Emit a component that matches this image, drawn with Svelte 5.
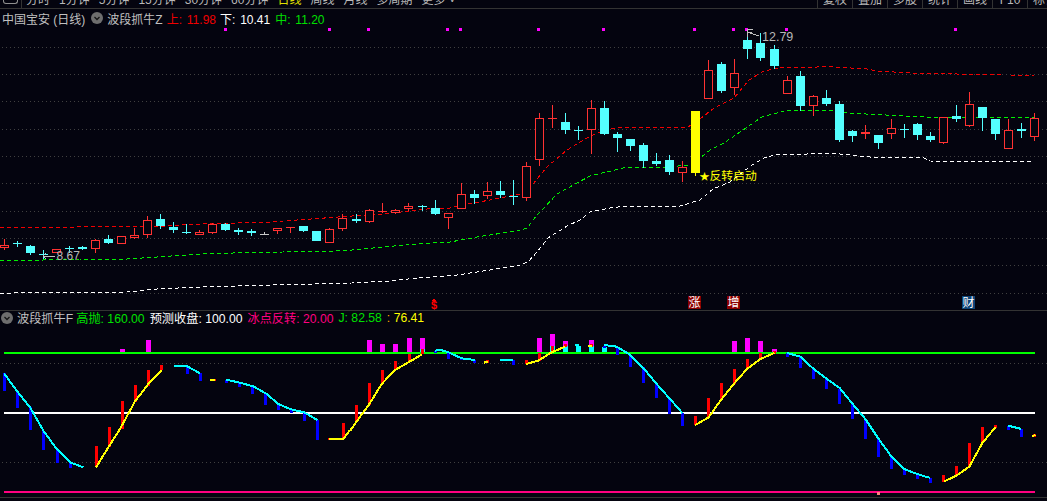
<script>
  const R = '#ff3232'
  const C = '#54ffff'

  // [open-top, close-bottom, high, low, colour]
  const candles = [
    [245,248,239,250,R],[243,243,241,247,C],[246,253,245,255,C],[254,254,250,259,C],[249,253,249,253,R],
    [248,248,246,253,C],[247,249,246,250,C],[240,249,239,253,R],[239,243,235,244,C],[236,244,236,244,R],
    [235,238,228,239,R],[220,235,216,238,R],[219,226,214,229,C],[227,230,222,233,C],[232,232,224,234,C],
    [232,235,230,235,R],[224,233,223,234,R],[224,230,223,231,C],[230,232,228,235,C],[231,233,229,236,C],
    [234,234,232,235,'#c8c8c8'],[228,231,228,234,R],[227,228,227,233,R],[226,231,226,232,C],[231,241,231,241,C],
    [229,243,228,243,R],[218,229,214,231,R],[219,221,214,223,C],[210,222,209,223,R],[211,212,203,213,R],
    [210,213,209,214,R],[206,209,203,211,R],[206,206,205,211,C],[208,214,200,215,C],[213,218,213,229,R],
    [194,209,183,209,R],[194,198,190,204,C],[191,196,182,199,R],[191,195,181,198,C],[196,196,180,205,C],
    [166,198,162,201,R],[118,160,113,166,R],[118,119,105,128,R],[122,130,113,134,C],[130,131,126,140,C],
    [108,130,100,154,R],[108,134,101,135,C],[134,138,132,152,C],[139,146,139,151,C],[145,161,143,168,C],
    [161,164,153,166,C],[160,172,155,175,C],[167,173,161,182,R],[111,173,111,176,'#ffff00'],[70,99,60,99,R],
    [64,91,62,93,C],[73,88,59,95,R],[40,49,30,59,C],[43,58,33,61,C],[49,66,45,69,C],
    [80,94,76,94,R],[76,106,71,111,C],[96,106,95,116,R],[98,104,90,106,C],[104,140,101,142,C],
    [131,136,130,142,C],[132,134,125,139,R],[135,143,135,149,C],[128,134,119,139,R],[129,130,124,138,C],
    [124,135,123,140,C],[136,140,132,142,C],[117,143,117,144,R],[116,119,105,122,C],[104,126,92,127,R],
    [107,118,107,131,C],[119,134,119,140,C],[130,149,119,149,R],[129,131,123,138,C],[118,137,113,141,R]
  ]
  const candleX = n => 4.5 + 13 * n + (n >= 59 ? 3 : n >= 32 ? 2 : n >= 27 ? 1 : 0)

  const pts = a => a.map(p => p.join(',')).join(' ')
  const redLine = [[0,227],[75,227],[130,226],[165,226],[200,224],[270,222],[352,216],[383,214],[427,209],[450,208],[463,205],[490,200],[520,194],[528,191],[537,179],[547,167],[567,150],[587,138],[595,134],[610,129],[623,127],[688,127],[700,119],[714,108],[734,98],[749,80],[764,71],[784,67],[817,67],[824,66],[834,67],[867,69],[877,71],[910,73],[1004,75],[1034,75]]
  const greenLine = [[0,261],[43,260],[80,259],[127,259],[157,257],[200,254],[233,253],[333,251],[352,250],[383,247],[417,244],[450,242],[483,236],[517,231],[527,228],[537,215],[543,209],[557,194],[577,183],[590,176],[623,168],[667,167],[690,165],[700,158],[710,150],[724,143],[740,132],[762,117],[784,111],[834,110],[847,113],[924,117],[1034,118]]
  const whiteLine = [[0,294],[13,293],[127,292],[157,289],[200,287],[273,285],[352,283],[390,281],[417,278],[457,275],[490,270],[520,265],[528,262],[537,252],[548,238],[567,226],[580,220],[590,212],[610,208],[627,206],[680,206],[700,200],[713,189],[730,182],[752,165],[764,158],[774,155],[807,154],[830,153],[870,157],[924,158],[930,161],[1034,162]]

  const grid = [47,74,101,129,156,183,211,238,265,293]
  const marks = [225,329,368,447,460,538,603,694,733,746,786,955]
  const badges = [[688,'涨','#8b0000'],[727,'增','#8b0000'],[962,'财','#0c4478']]

  // sub chart measured from crops at 3x, each crop starting at x = ox, y = 334
  const sx = (ox, x) => ox + x / 3
  const sy = y => 334 + y / 3
  const O1 = 0, O2 = 350, O3 = 697
  const curve = (ox, list) => pts(list.map(([x, y]) => [sx(ox, x), sy(y)]))
  const bars = (ox, list) => list.map(([x, a, b]) => ({ x: sx(ox, x) - 1.5, y: sy(a), h: (b - a) / 3 }))
  const wide = (ox, list) => list.map(([x, a, b]) => ({ x: sx(ox, x), y: sy(a), h: (b - a) / 3 }))

  const magenta = [
    ...wide(O1, [[360,45,57],[438,18,57]]),
    ...wide(O2, [[51,18,57],[90,30,57],[129,30,57],[171,12,57],[210,12,57],[522,54,59],[561,12,57],[600,0,36],[639,21,36],[717,18,36]]),
    ...wide(O3, [[66,57,60],[105,21,57],[144,12,57],[183,21,57],[225,45,55]])
  ]
  const cyanBlocks = wide(O2, [[210,45,57],[600,36,57],[639,36,60],[678,36,60],[717,36,60],[756,39,60]])
  const blue = [
    ...bars(O1, [[13,118,170],[52,170,222],[91,220,288],[130,290,348],[172,345,388],[211,385,402],[562,96,120],[601,118,141],[679,137,147],[718,147,159],[757,157,180],[796,180,213],[835,210,228],[874,225,237],[913,235,261],[952,258,318]]),
    ...bars(O2, [[256,50,58],[295,55,75],[334,72,78],[373,78,87],[490,77,93],[802,38,63],[763,36,42],[841,62,99],[880,99,147],[919,147,192],[958,192,240],[997,238,276]]),
    ...bars(O3, [[271,57,69],[310,66,102],[349,102,135],[388,135,165],[427,165,210],[466,210,255],[505,255,315],[544,315,369],[583,369,405],[622,405,423],[661,423,435],[700,432,447],[934,277,288],[973,285,309]])
  ]
  const red = [
    ...bars(O1, [[289,336,400],[328,279,340],[367,201,285],[406,153,205],[445,108,155],[484,93,108],[642,135,141],[989,312,318],[1030,267,315]]),
    ...bars(O2, [[19,213,265],[58,147,213],[97,108,150],[136,81,108],[178,60,80],[217,45,60],[412,78,87],[529,78,90],[568,57,80],[607,36,55],[646,30,38],[724,30,40]]),
    ...bars(O3, [[34,192,250],[73,147,195],[112,105,150],[151,75,105],[190,57,75],[232,50,60],[739,423,443],[778,396,423],[817,327,398],[856,279,327],[895,273,282],[1012,300,309]]),
    ...bars(O2, [[1036,246,273]])
  ]
  const cyanLines = [
    curve(O1, [[12,118],[50,170],[90,220],[130,290],[170,345],[210,385],[250,400]]),
    curve(O1, [[522,96],[560,96],[600,118]]),
    curve(O1, [[678,137],[715,145],[760,157],[800,180],[835,210],[870,225],[912,235],[952,258]]),
    curve(O2, [[255,50],[270,47],[295,55],[335,73],[375,78]]),
    curve(O2, [[450,78],[490,77]]),
    curve(O2, [[676,32],[688,32]]),
    curve(O2, [[762,33],[800,38],[840,62],[880,102],[920,150],[960,195],[998,238]]),
    curve(O3, [[270,57],[310,68],[350,105],[390,135],[428,162],[467,210],[505,255],[545,315],[585,370],[622,405],[660,420],[700,432]]),
    curve(O3, [[934,275],[973,285]])
  ]
  const yellowLines = [
    curve(O1, [[288,400],[325,340],[360,285],[405,202],[445,150],[485,108]]),
    curve(O1, [[630,139],[645,137]]),
    curve(O1, [[988,315],[1030,315],[1050,288]]),
    curve(O2, [[0,291],[20,262],[55,215],[95,150],[135,108],[175,85],[215,62]]),
    curve(O2, [[402,86],[415,82]]),
    curve(O2, [[528,90],[565,80],[605,55],[645,38]]),
    curve(O2, [[714,37],[726,35]]),
    curve(O2, [[1035,273],[1050,265]]),
    curve(O3, [[0,270],[35,250],[70,200],[110,150],[150,105],[190,75],[232,57]]),
    curve(O3, [[740,443],[778,425],[817,398],[856,327],[895,280]]),
    curve(O3, [[1005,307],[1015,303]])
  ]

  const periods = ['分时','1分钟','5分钟','15分钟','30分钟','60分钟','日线','周线','月线','多周期','更多 ˅']
  const tools = ['复权','叠加','多股','统计','画线','F10','标记']
</script>

<div class="page">
  <div class="toolbar">
    <span class="home"></span>
    <div class="periods">
      {#each periods as p}
        <span class:active={p === '日线'}>{p}</span>
      {/each}
    </div>
    <div class="tools">
      {#each tools as t}
        <span>{t}</span>
      {/each}
    </div>
  </div>

  <div class="panel main">
    <svg class="chart" viewBox="0 9 1047 301" width="1047" height="301">
      {#each grid as y}
        <line class="grid" x1="2" x2="1047" y1={y + 0.5} y2={y + 0.5} />
      {/each}
      {#each marks as x}
        <rect x={x - 1} y="28" width="3" height="3" fill="#ff00ff" />
      {/each}

      <polyline class="dash" stroke="#f00000" points={pts(redLine)} />
      <polyline class="dash" stroke="#00f000" points={pts(greenLine)} />
      <polyline class="dash" stroke="#ffffff" points={pts(whiteLine)} />

      {#each candles as [top, bot, hi, lo, col], n}
        {@const x = candleX(n)}
        <line x1={x} x2={x} y1={hi} y2={lo} stroke={col} />
        {#if top === bot || bot - top < 2}
          <line x1={x - 4.5} x2={x + 4.5} y1={top + 0.5} y2={top + 0.5} stroke={col} />
        {:else if col === R}
          <rect x={x - 4} y={top + 0.5} width="8" height={bot - top - 1} fill="#04040f" stroke={col} />
        {:else}
          <rect x={x - 4.5} y={top} width="9" height={bot - top} fill={col} />
        {/if}
      {/each}

      <path class="arrow" d="M747.5 29v8M747.5 29.500h5M747.5 32.500h4M750 33l9 3" />
      <text class="peak" x="762" y="41">12.79</text>
      <path class="arrow" d="M46 253l-3 3l3 3M43 256h12" />
      <text class="peak small" x="56.500" y="260">8.67</text>

      <text class="star" x="699.500" y="180">★</text>
      <text class="note" x="709.500" y="180">反转启动</text>

      <path d="M434 298l2 3h-4z" fill="#ff0000" />
      <text class="dollar" x="434" y="309">$</text>
      {#each badges as [x, label, bg]}
        <rect {x} y="296" width="13" height="13" fill={bg} />
        <text class="badge" x={x + 6.5} y="307">{label}</text>
      {/each}
    </svg>

    <div class="head">
      <span class="name">中国宝安 (日线)</span>
      <span class="chev"><svg viewBox="0 0 12 12" width="12" height="12"><circle cx="6" cy="6" r="6" fill="#6e6e6e"/><path d="M3.5 5l2.5 2.5L8.500 5" fill="none" stroke="#151515" stroke-width="1.300"/></svg></span>
      <span class="name">波段抓牛Z</span>
      <span class="up">上: 11.98</span>
      <span class="down">下: 10.41</span>
      <span class="mid last">中: 11.20</span>
    </div>
  </div>

  <div class="panel sub">
    <svg class="chart" viewBox="0 311 1047 190" width="1047" height="190">
      <line class="grid" x1="2" x2="1047" y1="363.500" y2="363.500" />
      <line class="grid" x1="2" x2="1047" y1="462.500" y2="462.500" />

      {#each magenta as b}
        <rect x={b.x} y={b.y} width="5" height={b.h} fill="#ff00ff" />
      {/each}
      {#each cyanBlocks as b}
        <rect x={b.x} y={b.y} width="5" height={b.h} fill="#00ffff" />
      {/each}

      <rect x="4" y="352" width="1031" height="2" fill="#00ff00" />
      <rect x="4" y="412" width="1031" height="2" fill="#ffffff" />
      <rect x="4" y="491" width="1031" height="2" fill="#ff0080" />
      <rect x="877" y="492" width="3" height="3" fill="#ff8080" />
      <rect x="0" y="497" width="1047" height="1" fill="#333333" />

      {#each blue as b}
        <rect x={b.x} y={b.y} width="3" height={b.h} fill="#0000ff" />
      {/each}
      {#each red as b}
        <rect x={b.x} y={b.y} width="3" height={b.h} fill="#ff0000" />
      {/each}
      {#each cyanLines as p}
        <polyline class="curve" stroke="#00ffff" points={p} />
      {/each}
      {#each yellowLines as p}
        <polyline class="curve" stroke="#ffff00" points={p} />
      {/each}
    </svg>

    <div class="head">
      <span class="chev"><svg viewBox="0 0 12 12" width="12" height="12"><circle cx="6" cy="6" r="6" fill="#6e6e6e"/><path d="M3.5 5l2.5 2.5L8.500 5" fill="none" stroke="#151515" stroke-width="1.300"/></svg></span>
      <span class="name">波段抓牛F</span>
      <span class="mid">高抛: 160.00</span>
      <span class="down">预测收盘: 100.00</span>
      <span class="pink">冰点反转: 20.00</span>
      <span class="mid">J: 82.58</span>
      <span class="gold"><i>:</i> 76.41</span>
    </div>
  </div>
</div>

<style>
  :global(body) {
    margin: 0;
    background: #04040f;
  }

  .page {
    display: flex;
    flex-direction: column;
    width: 1047px;
    height: 501px;
    overflow: hidden;
    background: #04040f;
    font-family: "Liberation Sans", "Noto Sans CJK SC", sans-serif;
    font-size: 12px;
    color: #b8b8b8;
  }

  .toolbar {
    display: flex;
    height: 8px;
    overflow: hidden;
    border-bottom: 1px solid #333333;
    flex: none;
  }

  .home {
    flex: none;
    width: 13px;
    height: 3px;
    margin-left: 3px;
    border: 1px solid #909090;
    border-top: 0;
    border-radius: 0 0 3px 3px;
  }

  .periods {
    display: flex;
    gap: 9px;
    margin-left: 3px;
    padding-left: 4px;
    border-left: 1px solid #333333;
    flex: 1;
    height: 8px;
    line-height: 0;
    align-items: flex-start;
  }

  .periods span {
    line-height: 1px;
  }

  .periods span.active {
    color: #e0e000;
  }

  .tools {
    display: flex;
    flex: none;
    width: 230px;
    height: 8px;
    overflow: hidden;
  }

  .tools span {
    flex: none;
    box-sizing: border-box;
    width: 35px;
    line-height: 1px;
    text-align: center;
    border-left: 1px solid #333333;
  }

  .panel {
    position: relative;
    flex: none;
  }

  .main {
    height: 301px;
    border-bottom: 1px solid #333333;
  }

  .sub {
    height: 190px;
  }

  .chart {
    display: block;
    shape-rendering: crispEdges;
  }

  .head {
    position: absolute;
    top: 1px;
    left: 2px;
    display: flex;
    align-items: center;
    gap: 4px;
    height: 16px;
    white-space: nowrap;
  }

  .chev {
    display: flex;
    margin: 0 0 0 2px;
  }

  .main .up, .main .down, .main .last {
    word-spacing: 1.5px;
  }

  .main .last {
    margin-left: 1px;
  }

  .sub .head {
    left: 1px;
    top: -1px;
    gap: 5px;
    font-size: 12.2px;
  }

  .sub .chev {
    margin: 0 -1px 0 0;
  }

  .sub .name {
    margin-right: -2px;
  }

  .name { color: #c0c0c0; }
  .up { color: #f00000; }
  .down { color: #ffffff; }
  .mid { color: #00e000; }
  .pink { color: #ff0080; }
  .gold { color: #ffff00; }
  .gold i { color: #ffb000; font-style: normal; }

  .grid {
    stroke: #404040;
    stroke-dasharray: 1 3;
  }

  .dash {
    fill: none;
    stroke-width: 1;
    stroke-dasharray: 4 3;
  }

  .curve {
    fill: none;
    stroke-width: 2;
  }

  .arrow {
    fill: none;
    stroke: #c0c0c0;
  }

  text {
    font-family: "Liberation Sans", "Noto Sans CJK SC", sans-serif;
    font-size: 12px;
    shape-rendering: auto;
  }

  .peak { fill: #b8b8b8; font-size: 12.5px; }
  .peak.small { font-size: 12px; }
  .note { fill: #ffff00; font-size: 11.8px; }
  .star { fill: #ffff00; font-size: 10px; }
  .dollar { fill: #ff0000; text-anchor: middle; font-size: 11px; font-weight: bold; }
  .badge { fill: #ffffff; text-anchor: middle; }
</style>
